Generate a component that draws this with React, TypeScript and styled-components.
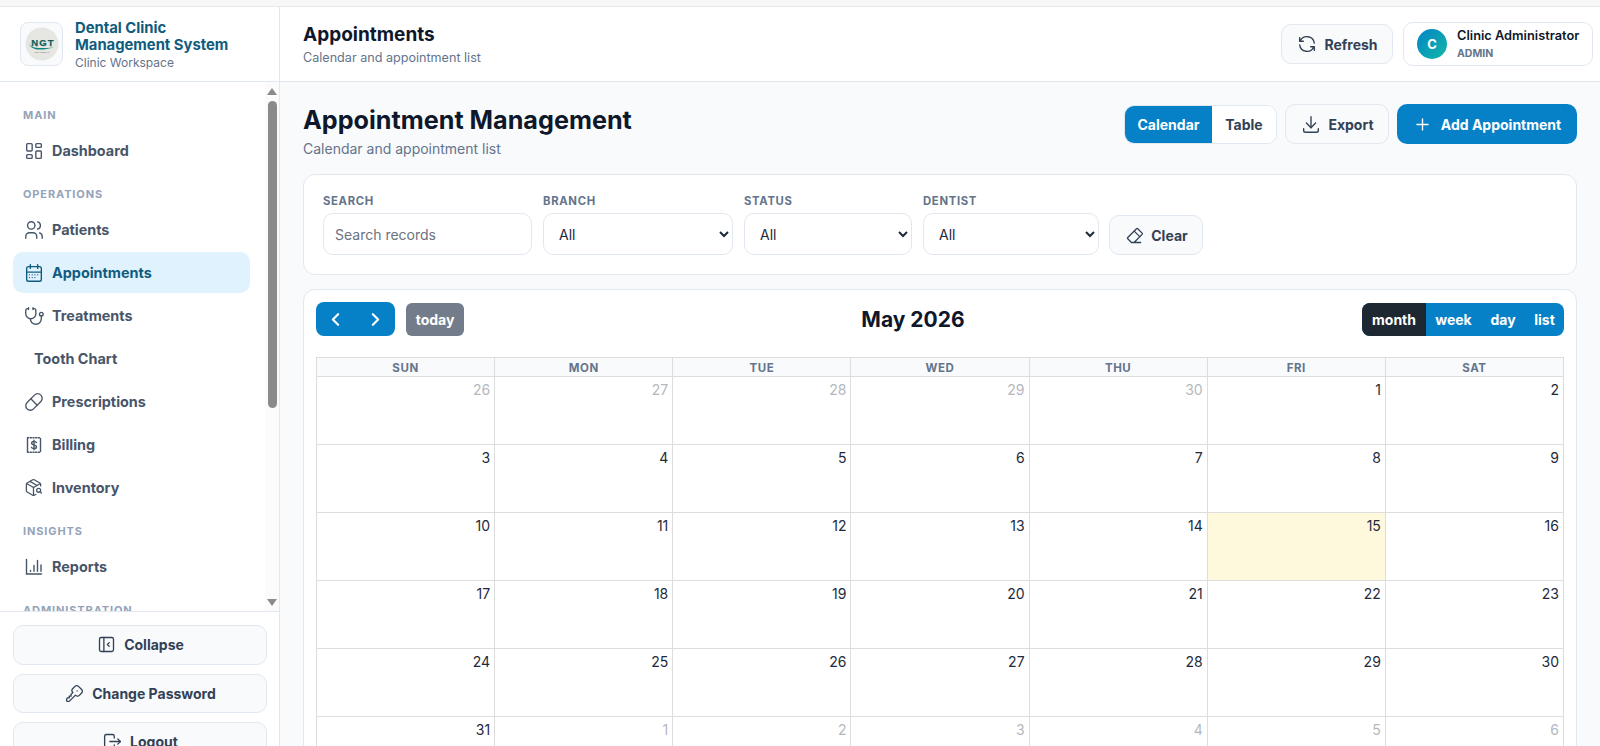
import { ReactNode } from 'react'
import styled, { createGlobalStyle } from 'styled-components'
import {
  TbCalendarMonth,
  TbChevronLeft,
  TbChevronRight,
  TbDownload,
  TbEraser,
  TbKey,
  TbLayoutDashboard,
  TbLayoutSidebarLeftCollapse,
  TbLogout,
  TbPill,
  TbPlus,
  TbRefresh,
  TbStethoscope,
  TbUsers,
} from 'react-icons/tb'
import { PackageSearch } from 'lucide-react'

const GlobalStyle = createGlobalStyle`
  * { box-sizing: border-box; }
  html, body { margin: 0; padding: 0; height: 746px; overflow: hidden; }
  body { font-family: Inter, "Liberation Sans", sans-serif; background: #f8fafc; color: #0f172a; }
`

const Shell = styled.div`
  height: 746px;
  display: flex;
  flex-direction: column;
  overflow: hidden;
`

const TopStrip = styled.div`
  height: 7px;
  flex: none;
  background: #f7f7f7;
  border-bottom: 1px solid #e5e7eb;
`

const Body = styled.div`
  flex: 1;
  min-height: 0;
  display: flex;
`

const Sidebar = styled.aside`
  width: 280px;
  flex: none;
  display: flex;
  flex-direction: column;
  background: #fff;
  border-right: 1px solid #e2e8f0;
`

const Brand = styled.div`
  height: 75px;
  flex: none;
  display: flex;
  align-items: center;
  gap: 12px;
  padding: 0 20px;
  border-bottom: 1px solid #e2e8f0;
`

const LogoBox = styled.div`
  width: 43px;
  height: 44px;
  flex: none;
  display: flex;
  align-items: center;
  justify-content: center;
  background: #f8fafc;
  border: 1px solid #e2e8f0;
  border-radius: 8px;
`

const BrandTitle = styled.div`
  margin-top: 1px;
  font-size: 14.8px;
  line-height: 17px;
  font-weight: 700;
  color: #0f5c7e;
`

const BrandSub = styled.div`
  margin-top: 1px;
  font-size: 12px;
  line-height: 15px;
  color: #64748b;
`

const NavArea = styled.div`
  flex: 1;
  min-height: 0;
  display: flex;
`

const NavList = styled.nav`
  flex: 1;
  min-width: 0;
  overflow: hidden;
  padding: 12px 15px 0 13px;
`

const SectionLabel = styled.div`
  height: 36px;
  padding: 15px 0 0 10px;
  font-size: 11px;
  line-height: 13px;
  font-weight: 700;
  letter-spacing: 0.08em;
  color: #94a3b8;
  text-transform: uppercase;
  white-space: nowrap;
`

const NavItem = styled.a<{ $active?: boolean; $bare?: boolean }>`
  height: 41px;
  margin-bottom: 2px;
  display: flex;
  align-items: center;
  gap: 7px;
  padding-left: ${p => (p.$bare ? '21px' : '9px')};
  border-radius: 10px;
  font-size: 14.4px;
  font-weight: 700;
  color: ${p => (p.$active ? '#0f5c7e' : '#475569')};
  background: ${p => (p.$active ? '#e0f2fe' : 'transparent')};
  svg { flex: none; }
`

const IconSlot = styled.span`
  width: 23px;
  height: 23px;
  flex: none;
  display: flex;
  align-items: center;
  justify-content: center;
`

const Track = styled.div`
  width: 14px;
  flex: none;
  display: flex;
  flex-direction: column;
  align-items: center;
  background: #fbfbfb;
  padding: 6px 0 5px;
`

const Arrow = styled.div<{ $down?: boolean }>`
  width: 0;
  height: 0;
  flex: none;
  border-left: 5px solid transparent;
  border-right: 5px solid transparent;
  ${p => (p.$down ? 'border-top: 7px solid #8a8a8a;' : 'border-bottom: 7px solid #8a8a8a;')}
`

const Thumb = styled.div`
  width: 9px;
  height: 307px;
  margin: 6px 0 auto;
  background: #8a8a8a;
  border-radius: 5px;
`

const SideFooter = styled.div`
  flex: none;
  height: 135px;
  padding: 13px 12px 0 13px;
  display: flex;
  flex-direction: column;
  gap: 9px;
  overflow: hidden;
  border-top: 1px solid #e2e8f0;
`

const FooterButton = styled.button`
  height: 39.5px;
  flex: none;
  display: flex;
  align-items: center;
  justify-content: center;
  gap: 7px;
  background: #f8fafc;
  border: 1px solid #e2e8f0;
  border-radius: 10px;
  font: 700 14px Inter, sans-serif;
  color: #334155;
`

const Main = styled.main`
  flex: 1;
  min-width: 0;
  display: flex;
  flex-direction: column;
`

const Header = styled.header`
  height: 75px;
  flex: none;
  display: flex;
  align-items: center;
  justify-content: space-between;
  padding: 0 7px 0 23px;
  background: #fff;
  border-bottom: 1px solid #e2e8f0;
`

const HeaderTitle = styled.h2`
  margin: 0;
  font-size: 19px;
  line-height: 25px;
  font-weight: 700;
  color: #0f172a;
`

const HeaderSub = styled.div`
  margin-top: 3px;
  font-size: 12.6px;
  line-height: 16px;
  color: #64748b;
`

const HeaderActions = styled.div`
  display: flex;
  align-items: center;
  gap: 10px;
`

const GhostButton = styled.button<{ $w: number }>`
  width: ${p => p.$w}px;
  height: 40px;
  display: flex;
  align-items: center;
  justify-content: center;
  gap: 6px;
  background: #f8fafc;
  border: 1px solid #e2e8f0;
  border-radius: 10px;
  font: 700 14px Inter, sans-serif;
  color: #334155;
`

const UserBox = styled.div`
  width: 190px;
  height: 44px;
  display: flex;
  align-items: center;
  gap: 10px;
  padding-left: 13px;
  background: #fff;
  border: 1px solid #e2e8f0;
  border-radius: 10px;
`

const Avatar = styled.div`
  width: 30px;
  height: 30px;
  flex: none;
  display: flex;
  align-items: center;
  justify-content: center;
  border-radius: 50%;
  background: linear-gradient(135deg, #0284c7, #14b8a6);
  color: #fff;
  font-size: 13px;
  font-weight: 700;
`

const UserName = styled.div`
  margin-top: -1px;
  font-size: 12.8px;
  line-height: 16px;
  font-weight: 600;
  color: #0f172a;
  white-space: nowrap;
`

const UserRole = styled.div`
  margin-top: 3px;
  font-size: 10.5px;
  line-height: 13px;
  font-weight: 700;
  color: #64748b;
`

const Content = styled.div`
  flex: 1;
  min-height: 0;
  overflow: hidden;
  padding: 22px 23px 0;
`

const PageHead = styled.div`
  height: 70px;
  display: flex;
  justify-content: space-between;
  align-items: flex-start;
`

const PageTitle = styled.h1`
  margin: 0;
  font-size: 25.2px;
  line-height: 32px;
  font-weight: 700;
  color: #0f172a;
`

const PageSub = styled.div`
  margin-top: 4px;
  font-size: 14px;
  line-height: 18px;
  color: #64748b;
`

const PageActions = styled.div`
  display: flex;
  align-items: center;
  gap: 8px;
`

const Segment = styled.div`
  display: flex;
  height: 39px;
  background: #fff;
  border: 1px solid #e2e8f0;
  border-radius: 10px;
  overflow: hidden;
`

const SegmentItem = styled.button<{ $on?: boolean; $w: number }>`
  width: ${p => p.$w}px;
  border: 0;
  font: 700 14px Inter, sans-serif;
  color: ${p => (p.$on ? '#fff' : '#334155')};
  background: ${p => (p.$on ? '#0681c8' : '#fff')};
`

const PrimaryButton = styled.button`
  width: 180px;
  height: 40px;
  display: flex;
  align-items: center;
  justify-content: center;
  gap: 9px;
  border: 0;
  border-radius: 10px;
  background: #0681c8;
  color: #fff;
  font: 700 14px Inter, sans-serif;
`

const Card = styled.section`
  background: #fff;
  border: 1px solid #e2e8f0;
  border-radius: 12px;
`

const FilterCard = styled(Card)`
  height: 101px;
  margin-bottom: 14px;
  padding: 19px 19px 0;
  display: flex;
  align-items: flex-start;
  gap: 11px;
`

const Field = styled.label<{ $w: number }>`
  width: ${p => p.$w}px;
  flex: none;
  display: flex;
  flex-direction: column;
  gap: 5px;
`

const FieldLabel = styled.span`
  font-size: 11.3px;
  line-height: 14px;
  font-weight: 700;
  letter-spacing: 0.06em;
  color: #64748b;
`

const SearchInput = styled.input`
  height: 42px;
  width: 100%;
  padding: 0 11px;
  background: #fff;
  border: 1px solid #e2e8f0;
  border-radius: 10px;
  outline: none;
  font: 400 14px Inter, sans-serif;
  &::placeholder { color: #6b7280; }
`

const Select = styled.select`
  height: 42px;
  width: 100%;
  padding: 0 11px;
  background: #fff;
  border: 1px solid #e2e8f0;
  border-radius: 10px;
  font: 400 14px Inter, sans-serif;
  color: #1e293b;
`

const ClearWrap = styled.div`
  margin-left: -1px;
  padding-top: 21px;
`

const CalendarCard = styled(Card)`
  padding: 12px 12px 40px;
`

const Toolbar = styled.div`
  height: 34px;
  margin-bottom: 21px;
  display: flex;
  justify-content: space-between;
  align-items: center;
`

const ToolLeft = styled.div`
  display: flex;
  align-items: center;
  gap: 11px;
`

const NavGroup = styled.div`
  width: 79px;
  height: 34px;
  display: flex;
  align-items: center;
  justify-content: space-around;
  border-radius: 8px;
  background: #0681c8;
  color: #fff;
`

const TodayButton = styled.button`
  width: 58px;
  height: 33px;
  border: 0;
  border-radius: 6px;
  background: #727c8b;
  color: #fff;
  font: 700 14px Inter, sans-serif;
`

const MonthTitle = styled.h3`
  margin: 0;
  font-size: 21px;
  font-weight: 700;
  color: #0f172a;
`

const ViewGroup = styled.div`
  height: 33px;
  display: flex;
  border-radius: 8px;
  overflow: hidden;
  background: #0681c8;
`

const ViewItem = styled.button<{ $on?: boolean; $w: number }>`
  width: ${p => p.$w}px;
  border: 0;
  padding: 0;
  background: ${p => (p.$on ? '#1e2832' : 'transparent')};
  color: #fff;
  font: 700 14px Inter, sans-serif;
`

const MonthGrid = styled.table`
  width: 100%;
  border-collapse: collapse;
  table-layout: fixed;
`

const DayHead = styled.th`
  height: 19px;
  padding: 1px 0 0;
  background: #f8fafc;
  border: 1px solid #dddddd;
  font-size: 11.5px;
  font-weight: 700;
  letter-spacing: 0.05em;
  color: #64748b;
`

const DayCell = styled.td<{ $today?: boolean; $muted?: boolean }>`
  height: 68px;
  padding: 3px 4px 0 0;
  vertical-align: top;
  text-align: right;
  border: 1px solid #dddddd;
  font-size: 14px;
  line-height: 20px;
  background: ${p => (p.$today ? '#fef8dd' : '#fff')};
  color: ${p => (p.$muted ? '#b4b8be' : '#1e293b')};
`

const LogoMark = () => (
  <svg width="34" height="34" viewBox="0 0 34 34">
    <circle cx="17" cy="17" r="16.5" fill="#e6e6e3" />
    <text x="18" y="19" textAnchor="middle" fontFamily="Liberation Sans" fontWeight="700" fontSize="9.5" letterSpacing="1.1" fill="#0f5f5c" stroke="#0f5f5c" strokeWidth="0.25">
      NGT
    </text>
    <path d="M3.5 14.5C4.5 21 10 22 29 20.5C16 23.5 5 24.5 3.5 14.5Z" fill="#12867a" />
    <text x="17" y="26" textAnchor="middle" fontFamily="Liberation Sans" fontSize="2.4" fill="#777">
      NGT DENTAL
    </text>
  </svg>
)

const BillingIcon = () => (
  <svg width="18" height="18" viewBox="0 0 18 18" fill="none" stroke="currentColor" strokeWidth="1.4" strokeLinecap="round" strokeLinejoin="round">
    <path d="M2.5 2.5V15.5M15.5 2.5V15.5" />
    <path d="M2.5 1.8h13M2.5 16.2h13" strokeDasharray="1.2 1.5" />
    <path d="M11.4 6.6C11 5.8 10.1 5.4 9 5.4c-1.4 0-2.4.8-2.4 1.8 0 2.4 4.9 1.1 4.9 3.5 0 1.1-1 1.9-2.5 1.9-1.2 0-2.2-.5-2.6-1.3M9 4.2v9.6" />
  </svg>
)

const ReportsIcon = () => (
  <svg width="18" height="18" viewBox="0 0 18 18" fill="none" stroke="currentColor" strokeWidth="1.4" strokeLinecap="round">
    <path d="M1.5 1.5v14.5h15" />
    <path d="M5.5 12.5v.8M9 7.5v5.8M12.5 2.5v10.8M16 7v6.3" />
  </svg>
)

type NavEntry = { label: string; icon?: ReactNode; active?: boolean }

const navGroups: { title: string; items: NavEntry[] }[] = [
  { title: 'Main', items: [{ label: 'Dashboard', icon: <TbLayoutDashboard size={22} strokeWidth={1.5} /> }] },
  {
    title: 'Operations',
    items: [
      { label: 'Patients', icon: <TbUsers size={22} strokeWidth={1.5} /> },
      { label: 'Appointments', icon: <TbCalendarMonth size={22} strokeWidth={1.5} />, active: true },
      { label: 'Treatments', icon: <TbStethoscope size={22} strokeWidth={1.5} /> },
      { label: 'Tooth Chart' },
      { label: 'Prescriptions', icon: <TbPill size={22} strokeWidth={1.5} /> },
      { label: 'Billing', icon: <BillingIcon /> },
      { label: 'Inventory', icon: <PackageSearch size={19} strokeWidth={1.6} /> },
    ],
  },
  { title: 'Insights', items: [{ label: 'Reports', icon: <ReportsIcon /> }] },
  { title: 'Administration', items: [] },
]

const weekdays = ['SUN', 'MON', 'TUE', 'WED', 'THU', 'FRI', 'SAT']

const weeks: { day: number; muted?: boolean; today?: boolean }[][] = [
  [
    { day: 26, muted: true },
    { day: 27, muted: true },
    { day: 28, muted: true },
    { day: 29, muted: true },
    { day: 30, muted: true },
    { day: 1 },
    { day: 2 },
  ],
  [3, 4, 5, 6, 7, 8, 9].map(day => ({ day })),
  [10, 11, 12, 13, 14, 15, 16].map(day => ({ day, today: day === 15 })),
  [17, 18, 19, 20, 21, 22, 23].map(day => ({ day })),
  [24, 25, 26, 27, 28, 29, 30].map(day => ({ day })),
  [
    { day: 31 },
    { day: 1, muted: true },
    { day: 2, muted: true },
    { day: 3, muted: true },
    { day: 4, muted: true },
    { day: 5, muted: true },
    { day: 6, muted: true },
  ],
]

const App = () => {
  return (
    <>
      <GlobalStyle />
      <Shell>
        <TopStrip />
        <Body>
          <Sidebar>
            <Brand>
              <LogoBox>
                <LogoMark />
              </LogoBox>
              <div>
                <BrandTitle>
                  Dental Clinic
                  <br />
                  Management System
                </BrandTitle>
                <BrandSub>Clinic Workspace</BrandSub>
              </div>
            </Brand>
            <NavArea>
              <NavList>
                {navGroups.map(group => (
                  <div key={group.title}>
                    <SectionLabel>{group.title}</SectionLabel>
                    {group.items.map(item => (
                      <NavItem key={item.label} $active={item.active} $bare={!item.icon}>
                        {item.icon && <IconSlot>{item.icon}</IconSlot>}
                        {item.label}
                      </NavItem>
                    ))}
                  </div>
                ))}
              </NavList>
              <Track>
                <Arrow />
                <Thumb />
                <Arrow $down />
              </Track>
            </NavArea>
            <SideFooter>
              <FooterButton>
                <TbLayoutSidebarLeftCollapse size={21} strokeWidth={1.5} />
                Collapse
              </FooterButton>
              <FooterButton>
                <TbKey size={21} strokeWidth={1.5} />
                Change Password
              </FooterButton>
              <FooterButton>
                <TbLogout size={21} strokeWidth={1.5} />
                Logout
              </FooterButton>
            </SideFooter>
          </Sidebar>
          <Main>
            <Header>
              <div>
                <HeaderTitle>Appointments</HeaderTitle>
                <HeaderSub>Calendar and appointment list</HeaderSub>
              </div>
              <HeaderActions>
                <GhostButton $w={112}>
                  <TbRefresh size={22} strokeWidth={1.5} />
                  Refresh
                </GhostButton>
                <UserBox>
                  <Avatar>C</Avatar>
                  <div>
                    <UserName>Clinic Administrator</UserName>
                    <UserRole>ADMIN</UserRole>
                  </div>
                </UserBox>
              </HeaderActions>
            </Header>
            <Content>
              <PageHead>
                <div>
                  <PageTitle>Appointment Management</PageTitle>
                  <PageSub>Calendar and appointment list</PageSub>
                </div>
                <PageActions>
                  <Segment>
                    <SegmentItem $on $w={87}>Calendar</SegmentItem>
                    <SegmentItem $w={64}>Table</SegmentItem>
                  </Segment>
                  <GhostButton $w={104}>
                    <TbDownload size={22} strokeWidth={1.5} />
                    Export
                  </GhostButton>
                  <PrimaryButton>
                    <TbPlus size={19} strokeWidth={1.75} />
                    Add Appointment
                  </PrimaryButton>
                </PageActions>
              </PageHead>
              <FilterCard>
                <Field $w={209}>
                  <FieldLabel>SEARCH</FieldLabel>
                  <SearchInput placeholder="Search records" />
                </Field>
                <Field $w={190}>
                  <FieldLabel>BRANCH</FieldLabel>
                  <Select><option>All</option></Select>
                </Field>
                <Field $w={168}>
                  <FieldLabel>STATUS</FieldLabel>
                  <Select><option>All</option></Select>
                </Field>
                <Field $w={176}>
                  <FieldLabel>DENTIST</FieldLabel>
                  <Select><option>All</option></Select>
                </Field>
                <ClearWrap>
                  <GhostButton $w={94}>
                    <TbEraser size={21} strokeWidth={1.5} />
                    Clear
                  </GhostButton>
                </ClearWrap>
              </FilterCard>
              <CalendarCard>
                <Toolbar>
                  <ToolLeft>
                    <NavGroup>
                      <TbChevronLeft size={21} strokeWidth={2.5} />
                      <TbChevronRight size={21} strokeWidth={2.5} />
                    </NavGroup>
                    <TodayButton>today</TodayButton>
                  </ToolLeft>
                  <MonthTitle>May 2026</MonthTitle>
                  <ViewGroup>
                    <ViewItem $on $w={64}>month</ViewItem>
                    <ViewItem $w={55}>week</ViewItem>
                    <ViewItem $w={44}>day</ViewItem>
                    <ViewItem $w={39}>list</ViewItem>
                  </ViewGroup>
                </Toolbar>
                <MonthGrid>
                  <thead>
                    <tr>
                      {weekdays.map(name => (
                        <DayHead key={name}>{name}</DayHead>
                      ))}
                    </tr>
                  </thead>
                  <tbody>
                    {weeks.map((week, i) => (
                      <tr key={i}>
                        {week.map((cell, j) => (
                          <DayCell key={j} $muted={cell.muted} $today={cell.today}>
                            {cell.day}
                          </DayCell>
                        ))}
                      </tr>
                    ))}
                  </tbody>
                </MonthGrid>
              </CalendarCard>
            </Content>
          </Main>
        </Body>
      </Shell>
    </>
  )
}

export default App
